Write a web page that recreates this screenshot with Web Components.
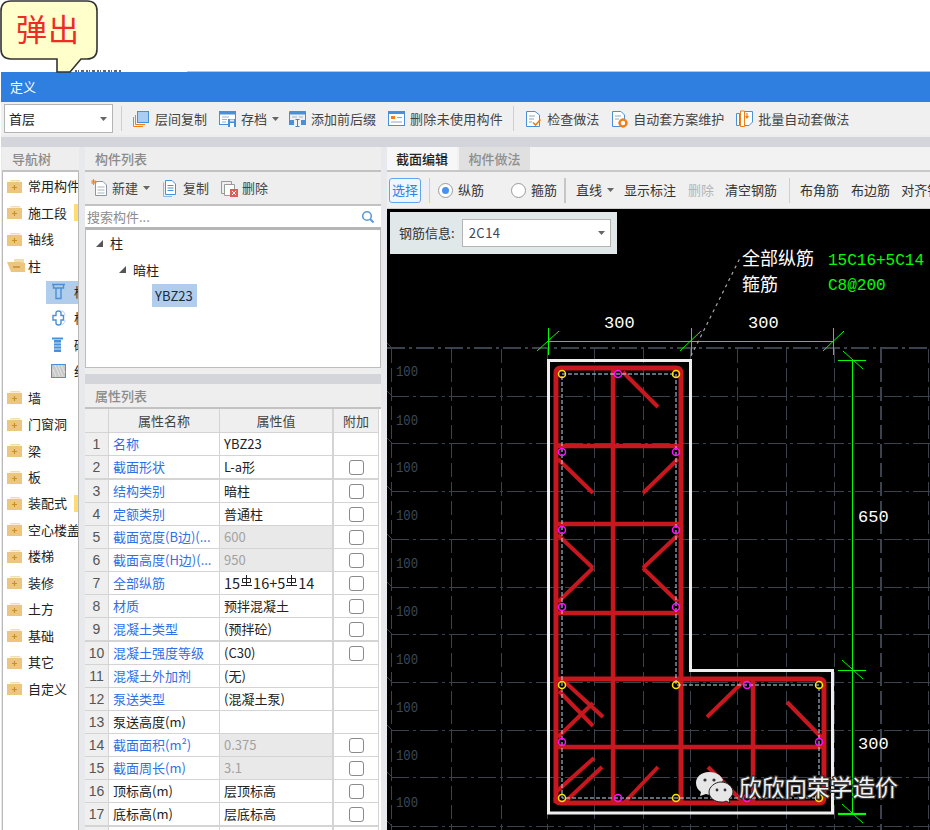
<!DOCTYPE html>
<html lang="zh-CN">
<head>
<meta charset="utf-8">
<title>定义</title>
<style>
  html, body { margin: 0; background: #fff; }
  body {
    width: 930px;
    height: 830px;
    overflow: hidden;
    font: 13px/18px "Noto Sans CJK SC", "Liberation Sans", sans-serif;
    color: #333;
  }
</style>
</head>
<body>
<page-top></page-top>
<def-window heading="定义">
  <main-toolbar slot="toolbar"></main-toolbar>
  <nav-panel></nav-panel>
  <list-panel></list-panel>
  <editor-panel></editor-panel>
</def-window>

<script>
const BLUE = '#4a90d9';
const ORANGE = '#f07f17';

const svg = (body, w = 18, h = 18) =>
  `<svg width="${w}" height="${h}" viewBox="0 0 ${w} ${h}" fill="none">${body}</svg>`;

const ICONS = {
  copyFloor: svg(`<rect x="5.5" y="1.5" width="11" height="11" fill="#a9cdf3" stroke="${BLUE}"/>
    <path d="M3.5 5V14.5H13M1.5 7V16.5H11" stroke="${ORANGE}"/>`),
  archive: svg(`<rect x=".5" y="1.5" width="16" height="13" fill="#fff" stroke="${BLUE}"/>
    <rect x="1" y="1" width="15" height="3.5" fill="${BLUE}"/>
    <path d="M3 7H10M3 9.5H8M3 12H7" stroke="#9db4cc"/>
    <rect x="9" y="9" width="8" height="8" fill="${BLUE}"/>
    <rect x="11" y="13" width="4" height="4" fill="#fff"/><rect x="11" y="9.5" width="4" height="2" fill="#dcebfa"/>`),
  addFix: svg(`<path d="M.5 13V1.5H16.5V13" stroke="${BLUE}"/>
    <rect x="1" y="1" width="15.5" height="3.5" fill="${BLUE}"/>
    <path d="M3 7H8M10 7H14" stroke="#9db4cc"/>
    <rect x="0" y="10" width="5" height="5" fill="${BLUE}"/>
    <rect x="12" y="10" width="5" height="5" fill="${BLUE}"/>
    <path d="M6.5 9.5H10.5M8.5 9.5V16.5M6.5 16.5H10.5" stroke="#5a7ea8"/>`),
  delUnused: svg(`<rect x=".5" y="1.5" width="16" height="14" fill="#fff" stroke="${BLUE}"/>
    <rect x="1" y="1" width="15" height="3" fill="${BLUE}"/>
    <rect x="3" y="6" width="4" height="3" fill="${ORANGE}"/>
    <path d="M9 7.5H14M3 12H14" stroke="#8fa6bf"/>`),
  check: svg(`<path d="M1.5 1.5H10L14.5 5V16.5H1.5Z" fill="#fff" stroke="${BLUE}"/>
    <path d="M4 6H10M4 9H9M4 12H7" stroke="#8fa6bf"/>
    <path d="M8 12.5L10.5 15L15.5 9.5" stroke="${ORANGE}" stroke-width="1.6"/>`),
  autoScheme: svg(`<path d="M1.5 1.5H10L13.5 5V16.5H1.5Z" fill="#fff" stroke="${BLUE}"/>
    <path d="M4 6H10M4 9H8" stroke="#8fa6bf"/>
    <circle cx="12" cy="13" r="3.4" fill="#fff" stroke="${ORANGE}" stroke-width="2.4"/>
    <path d="M12 8.5V10M12 16V17.5M7.5 13H9M15 13H16.5" stroke="${ORANGE}" stroke-width="1.6"/>`),
  batch: svg(`<path d="M.5 3.5H3.5V15.5H.5Z" fill="#fff" stroke="${BLUE}"/>
    <path d="M5 1.5H16.5V12L13 15.5H5Z" fill="#fff" stroke="${BLUE}"/>
    <path d="M4.5 1V16.5H8.5V1H4.5Z" fill="#fff" stroke="${ORANGE}"/>
    <path d="M11 3V7M9.5 6L11 8L12.5 6" stroke="${ORANGE}" stroke-width="1.2"/>`),
  newItem: svg(`<path d="M4.5 2.5H12L15.5 6V16.5H4.5Z" fill="#fff" stroke="#8a97a3"/>
    <path d="M6.5 8H13.5M6.5 11H13.5M6.5 14H13.5" stroke="#a9b3bd"/>
    <path d="M2.5 0V6M0 3H6M.7 1L4.5 5M4.5 1L.7 5" stroke="${ORANGE}" stroke-width=".9"/>`, 17, 18),
  copyDoc: svg(`<path d="M1.5 3.5V17.5H10" stroke="#8fb6de"/>
    <path d="M3.5 1.5H10L13.5 5V15.5H3.5Z" fill="#fff" stroke="${BLUE}"/>
    <path d="M5.5 6.5H11.5M5.5 9H11.5M5.5 11.5H11.5" stroke="${BLUE}"/>`, 15, 18),
  delDoc: svg(`<path d="M.5 2.5H10.5V14.5H.5Z" stroke="#9a9a9a"/>
    <path d="M3.5 5.5H13.5V16.5H3.5Z" fill="#fff" stroke="#9a9a9a"/>
    <rect x="9" y="10" width="8" height="8" fill="#d9605a"/>
    <path d="M11 12L15 16M15 12L11 16" stroke="#fff"/>`, 17, 18),
  folder: svg(`<path d="M3.5 1H12.5L14 2.5H3Z" fill="#f3dcae"/>
    <rect x="0" y="3" width="15" height="11" fill="#ecc67f"/>
    <path d="M5 8.5H10M7.5 6V11" stroke="#c78f2e" stroke-width="1.2"/>`, 16, 15),
  folderOpen: svg(`<path d="M7 1H17V13H8Z" fill="#f3dcae"/>
    <path d="M0 4H13L18 5V14H4Z" fill="#ecc67f"/>
    <path d="M6 9H13" stroke="#c78f2e" stroke-width="1.5"/>`, 19, 15),
  colFrame: svg(`<path d="M1 1.5H14M2.5 1.5V5H12.5V1.5" stroke="${BLUE}" stroke-width="1.4"/>
    <path d="M5 5V15.5H10V5" stroke="${BLUE}" stroke-width="1.4"/>`, 15, 17),
  colTie: svg(`<path d="M5 3Q5 1 7.5 1Q10 1 10 3V5.5H12.5V10H10V13Q10 15 7.5 15Q5 15 5 13V10H2V5.5H5Z" fill="#fff" stroke="${BLUE}" stroke-width="1.4"/>
    <path d="M10 1C13 1 14 3 14 5.5M14 10C14 12 13 14 10.5 15" stroke="#bcd3ec"/>`, 15, 16),
  colBrick: svg(`<path d="M1 1.5H12" stroke="${BLUE}" stroke-width="2"/>
    <rect x="3" y="3" width="7" height="12" fill="${BLUE}"/>
    <path d="M3 6H10M3 9H10M3 12H10" stroke="#cfe2f5"/>`, 13, 16),
  colEdge: svg(`<rect x=".5" y=".5" width="14" height="13" fill="#c9c9c9" stroke="${BLUE}"/>
    <path d="M4 1L9 13M7 1L12 13M2 5L5 13M10 1L14 9" stroke="#e4e4e4"/>`, 15, 14),
  search: svg(`<circle cx="6" cy="6" r="4.3" stroke="#5b9bd5" stroke-width="1.6"/>
    <path d="M9 9L12.5 12.5" stroke="#5b9bd5" stroke-width="2"/>`, 13, 13)
};

const ARROW = `<svg width="7" height="4" viewBox="0 0 7 4"><path d="M0 0H7L3.5 4Z" fill="#666"/></svg>`;

class PageTop extends HTMLElement {
  constructor() {
    super();
    this.attachShadow({ mode: 'open' }).innerHTML = `
<style>
  :host { display: block; height: 72px; position: relative; }
  .rule { position: absolute; left: 187px; right: 0; bottom: 0; height: 1px; background: #c4c4c4; }
  .dots { position: absolute; left: 75px; bottom: 0; display: block; }
  callout-bubble { position: absolute; left: 0; top: 0; }
</style>
<div class="rule"></div>
<svg class="dots" width="48" height="2"><path d="M0 1H47" stroke="#666" stroke-width="2" stroke-dasharray="2 1 1 2 3 2"/></svg>
<callout-bubble>弹出</callout-bubble>`;
  }
}

class CalloutBubble extends HTMLElement {
  constructor() {
    super();
    this.attachShadow({ mode: 'open' }).innerHTML = `
<style>
  :host { display: block; width: 99px; height: 72px; }
  svg { position: absolute; left: 0; top: 0; }
  .label {
    position: absolute; left: 16px; top: 6px; width: 66px; height: 44px;
    font-size: 31px; line-height: 44px; color: #ee2b24; letter-spacing: 1px; white-space: nowrap;
  }
</style>
<svg width="99" height="73" viewBox="0 0 99 73">
  <path d="M11 1H87Q97 1 97 11V49Q97 59 87 59H81L70 72H57V59H11Q1 59 1 49V11Q1 1 11 1Z"
        fill="#ffffcc" stroke="#333" stroke-width="1.6"/>
</svg>
<div class="label"><slot></slot></div>`;
  }
}

class DefWindow extends HTMLElement {
  connectedCallback() {
    this.attachShadow({ mode: 'open' }).innerHTML = `
<style>
  :host { display: flex; flex-direction: column; height: 758px; margin-left: 1px; overflow: hidden; }
  .title {
    flex: none; height: 30px; padding-left: 9px; background: #2e7fe0; color: #fff;
    display: flex; align-items: center; font-size: 13px;
  }
  .band { flex: none; height: 12px; background: #d3d5da; box-sizing: border-box; border-top: 2px solid #ececec; }
  .panes {
    flex: 1; min-height: 0; display: flex; background: #e8e9ec; padding-left: 1px;
  }
</style>
<div class="title">${this.getAttribute('heading')}</div>
<slot name="toolbar"></slot>
<div class="band"></div>
<div class="panes"><slot></slot></div>`;
  }
}

class ToolBtn extends HTMLElement {
  connectedCallback() {
    const icon = ICONS[this.getAttribute('icon')] || '';
    const arrow = this.hasAttribute('menu') ? `<span class="arrow">${ARROW}</span>` : '';
    this.attachShadow({ mode: 'open' }).innerHTML = `
<style>
  :host { display: inline-flex; align-items: center; gap: var(--icon-gap, 5px); white-space: nowrap; color: #444; }
  svg { display: block; }
  .arrow { margin-left: 1px; display: flex; }
</style>
${icon}<slot></slot>${arrow}`;
  }
}

class ToolSep extends HTMLElement {
  constructor() {
    super();
    this.attachShadow({ mode: 'open' }).innerHTML = `
<style>:host { display: block; width: 1px; height: 25px; background: #cfcfcf; }</style>`;
  }
}

class ComboBox extends HTMLElement {
  connectedCallback() {
    this.attachShadow({ mode: 'open' }).innerHTML = `
<style>
  :host {
    display: flex; align-items: center; justify-content: space-between; box-sizing: border-box;
    background: #fff; border: 1px solid #b4b4b4; padding: 0 5px 0 var(--pad, 4px);
  }
  svg { display: block; }
</style>
<span><slot></slot></span>${ARROW}`;
  }
}

class MainToolbar extends HTMLElement {
  constructor() {
    super();
    this.attachShadow({ mode: 'open' }).innerHTML = `
<style>
  :host {
    display: flex; align-items: center; height: 33px; box-sizing: border-box; flex: none;
    padding-left: 3px; background: #f0f0f0; font-size: 13px; --icon-gap: 4px;
  }
  combo-box { width: 109px; height: 29px; color: #222; }
</style>
<combo-box>首层</combo-box>
<tool-sep style="margin-left:8px"></tool-sep>
<tool-btn icon="copyFloor" style="margin-left:10px;--icon-gap:5px">层间复制</tool-btn>
<tool-btn icon="archive" menu style="margin-left:12px">存档</tool-btn>
<tool-btn icon="addFix" style="margin-left:10px">添加前后缀</tool-btn>
<tool-btn icon="delUnused" style="margin-left:12px;letter-spacing:.3px">删除未使用构件</tool-btn>
<tool-sep style="margin-left:10px"></tool-sep>
<tool-btn icon="check" style="margin-left:11px">检查做法</tool-btn>
<tool-btn icon="autoScheme" style="margin-left:12px">自动套方案维护</tool-btn>
<tool-btn icon="batch" style="margin-left:12px">批量自动套做法</tool-btn>`;
  }
}

class PanelHeader extends HTMLElement {
  constructor() {
    super();
    this.attachShadow({ mode: 'open' }).innerHTML = `
<style>
  :host {
    display: flex; align-items: center; flex: none; height: 23px; box-sizing: content-box;
    padding-left: 10px; background: #eee; color: #8b8b8b; font-size: 13px; font-weight: 500;
    border-bottom: 2px solid #c2c2c2; white-space: nowrap; overflow: hidden;
  }
</style>
<slot></slot>`;
  }
}

const NAV_ITEMS = [
  ['常用构件'], ['施工段', 'flag'], ['轴线'], ['柱', 'open'],
  ['框柱', 'sel', 'colFrame'], ['构造柱', 'sub', 'colTie'], ['砌体柱', 'sub', 'colBrick'], ['约束边缘', 'sub', 'colEdge'],
  ['墙'], ['门窗洞'], ['梁'], ['板'], ['装配式', 'flag'], ['空心楼盖'], ['楼梯'], ['装修'], ['土方'], ['基础'], ['其它'], ['自定义']
];

class NavPanel extends HTMLElement {
  constructor() {
    super();
    const rows = NAV_ITEMS.map(([text, kind, icon]) => {
      if (kind === 'sel' || kind === 'sub') {
        return `<div class="row sub ${kind}"><span class="ic">${ICONS[icon]}</span><span class="txt">${text}</span></div>`;
      }
      const folder = kind === 'open' ? ICONS.folderOpen : ICONS.folder;
      const flag = kind === 'flag' ? '<i class="flag"></i>' : '';
      return `<div class="row"><span class="fold">${folder}</span><span class="txt">${text}</span>${flag}</div>`;
    }).join('');
    this.attachShadow({ mode: 'open' }).innerHTML = `
<style>
  :host { display: flex; flex-direction: column; flex: none; width: 77px; margin-right: 6px; }
  .tree {
    flex: 1; background: #fff; border-left: 1px solid #b9b9b9; border-right: 1px solid #b9b9b9;
    padding-top: 1px; overflow: hidden;
  }
  .row { position: relative; display: flex; align-items: center; height: 26.45px; white-space: nowrap; color: #222; }
  .fold { flex: none; width: 25px; padding-left: 4px; box-sizing: border-box; display: flex; }
  .fold svg { display: block; }
  .sub { margin-left: 43px; padding-left: 5px; }
  .sel { background: linear-gradient(#fff 0 2px, #b1cdec 2px 25px, #fff 25px); }
  .ic { flex: none; width: 23px; display: flex; }
  .flag { position: absolute; left: 71px; top: 5px; width: 8px; height: 17px; background: #ffdc73; }
</style>
<panel-header>导航树</panel-header>
<div class="tree">${rows}</div>`;
  }
}

class CompTree extends HTMLElement {
  constructor() {
    super();
    const tri = `<svg width="7" height="7" viewBox="0 0 7 7"><path d="M7 0V7H0Z" fill="#555"/></svg>`;
    this.attachShadow({ mode: 'open' }).innerHTML = `
<style>
  :host {
    display: block; box-sizing: border-box; height: 141px; background: #fff;
    border: 1px solid #bdbdbd; border-top: 3px solid #b5b5b5; color: #222;
  }
  .node { display: flex; align-items: center; gap: 7px; height: 26.4px; white-space: nowrap; }
  .l0 { padding-left: 10px; }
  .l1 { padding-left: 33px; }
  .leaf {
    display: inline-flex; align-items: center; height: 23px; margin-left: 66px;
    padding: 0 4px 0 3px; background: #b1cdec; color: #1c2a3a;
  }
</style>
<div class="node l0">${tri}<span>柱</span></div>
<div class="node l1">${tri}<span>暗柱</span></div>
<div class="node"><span class="leaf">YBZ23</span></div>`;
  }
}

const REBAR = `<svg class="rb" width="11" height="11" viewBox="0 0 11 11"><path d="M1.5 3.5H9.5V7.5H1.5ZM5.5 0V10M0 10.5H11" stroke="currentColor" fill="none"/></svg>`;
// [名称, 值, 名称是否蓝色, 只读灰底, 有附加框, 行底粗线]
const PROPS = [
  ['名称', 'YBZ23', 1, 0, 0],
  ['截面形状', 'L-a形', 1, 0, 1, 1],
  ['结构类别', '暗柱', 1, 0, 1],
  ['定额类别', '普通柱', 1, 0, 1],
  ['截面宽度(B边)(...', '600', 1, 1, 1],
  ['截面高度(H边)(...', '950', 1, 1, 1],
  ['全部纵筋', `<span class="big">15</span>${REBAR}<span class="big">16+5</span>${REBAR}<span class="big">14</span>`, 1, 0, 1],
  ['材质', '预拌混凝土', 1, 0, 1],
  ['混凝土类型', '(预拌砼)', 1, 0, 1, 1],
  ['混凝土强度等级', '(C30)', 1, 0, 1],
  ['混凝土外加剂', '(无)', 1, 0, 0],
  ['泵送类型', '(混凝土泵)', 1, 0, 0],
  ['泵送高度(m)', '', 0, 0, 0],
  ['截面面积(m²)', '0.375', 1, 1, 1],
  ['截面周长(m)', '3.1', 1, 1, 1],
  ['顶标高(m)', '层顶标高', 0, 0, 1],
  ['底标高(m)', '层底标高', 0, 0, 1, 1]
];

class PropTable extends HTMLElement {
  constructor() {
    super();
    const rows = PROPS.map(([name, value, link, locked, box, thick], i) => `
<div class="row${thick ? ' thick' : ''}">
  <div class="c num">${i + 1}</div>
  <div class="c name${link ? ' link' : ''}">${name}</div>
  <div class="c val${locked ? ' locked' : ''}">${value}</div>
  <div class="c add">${box ? '<i class="box"></i>' : ''}</div>
</div>`).join('');
    this.attachShadow({ mode: 'open' }).innerHTML = `
<style>
  :host { display: block; background: #fff; color: #222; }
  .row { display: grid; grid-template-columns: 24px 111px 114px 45px; height: 23px; }
  .row.thick { height: 24px; }
  .c {
    display: flex; align-items: center; box-sizing: border-box; white-space: nowrap; overflow: hidden;
    border-right: 1px solid #d4d4d4; border-bottom: 1px solid #d4d4d4; padding-left: 3px;
  }
  .thick .c { border-bottom-width: 2px; }
  .head { height: 24px; }
  .head .c { background: #efefef; justify-content: center; color: #444; padding: 0; border-bottom-width: 1px; }
  .num { background: #efefef; justify-content: center; padding: 0; color: #555; font-size: 14px; font-family: "Liberation Sans", sans-serif; }
  .name { padding-left: 4px; }
  .link { color: #2f6fe4; }
  .val { padding-left: 4px; }
  .c:nth-child(3) { border-right-width: 2px; }
  .locked { background: #e9e9e9; color: #a2a2a2; }
  .add { justify-content: center; padding: 0; }
  .box { display: block; width: 13px; height: 13px; border: 1px solid #8a8a8a; border-radius: 3px; background: #fff; }
  .big { font-size: 14.5px; }
  .rb { margin: -5px 1px 0 1px; display: block; }
</style>
<div class="row head">
  <div class="c"></div><div class="c">属性名称</div><div class="c">属性值</div><div class="c">附加</div>
</div>
${rows}
<div class="row">
  <div class="c num"></div><div class="c"></div><div class="c"></div><div class="c add"><i class="box"></i></div>
</div>`;
  }
}

class ListPanel extends HTMLElement {
  constructor() {
    super();
    this.attachShadow({ mode: 'open' }).innerHTML = `
<style>
  :host { display: flex; flex-direction: column; flex: none; width: 296px; margin-right: 6px; overflow: hidden; }
  .tools {
    flex: none; display: flex; align-items: center; height: 32px; padding-left: 6px; gap: 12px;
    background: #eee; border-bottom: 2px solid #c2c2c2; --icon-gap: 4px;
  }
  .search {
    flex: none; display: flex; align-items: center; justify-content: space-between; height: 21px;
    padding: 0 7px 0 2px; background: #fff; color: #8c8c8c;
  }
  .search svg { display: block; }
  comp-tree { flex: none; }
  .gap { flex: none; height: 6px; background: #eee; }
  .gray { flex: none; height: 10px; background: #d3d5da; }
  prop-table { flex: 1; }
</style>
<panel-header>构件列表</panel-header>
<div class="tools">
  <tool-btn icon="newItem" menu>新建</tool-btn>
  <tool-btn icon="copyDoc" style="--icon-gap:6px">复制</tool-btn>
  <tool-btn icon="delDoc">删除</tool-btn>
</div>
<div class="search"><span>搜索构件...</span>${ICONS.search}</div>
<comp-tree></comp-tree>
<div class="gap"></div>
<div class="gray"></div>
<panel-header>属性列表</panel-header>
<prop-table></prop-table>`;
  }
}

class EditorPanel extends HTMLElement {
  constructor() {
    super();
    this.attachShadow({ mode: 'open' }).innerHTML = `
<style>
  :host { display: flex; flex-direction: column; flex: 1; min-width: 0; overflow: hidden; }
  .tabs { flex: none; display: flex; height: 23px; background: #f2f2f2; border-bottom: 2px solid #c8c8c8; }
  .tab { display: flex; align-items: center; justify-content: center; white-space: nowrap; }
  .on { width: 70px; background: #f7f7f7; color: #222; font-weight: 500; }
  .off { width: 71px; background: #e0e0e0; color: #8f8f8f; margin-left: 2px; font-weight: 500; }
  .bar {
    flex: none; display: flex; align-items: center; height: 37px; padding-left: 2px; background: #f0f0f0;
    border-bottom: 1px solid #cfcfcf; white-space: nowrap; overflow: hidden; box-sizing: border-box; color: #333;
  }
  .pick {
    box-sizing: border-box; width: 32px; height: 25px; display: flex; align-items: center; justify-content: center;
    border: 1px solid #62a5ef; border-radius: 3px; background: #eff6ff; color: #2f7fe6; flex: none;
  }
  .radio { box-sizing: border-box; width: 15px; height: 15px; border-radius: 50%; background: #fff; border: 1px solid #9a9a9a; flex: none; position: relative; }
  .radio.on-r::after { content: ""; position: absolute; left: 3px; top: 3px; width: 7px; height: 7px; border-radius: 50%; background: #4a90f0; }
  .t { flex: none; }
  tool-sep { flex: none; }
  .work { flex: 1; min-height: 0; position: relative; background: #000; }
  .info {
    position: absolute; left: 3px; top: 3px; width: 227px; height: 42px; background: #e1e8ea;
    display: flex; align-items: center; padding-left: 9px; gap: 7px; box-sizing: border-box; color: #333;
  }
  combo-box { width: 149px; height: 28px; --pad: 6px; color: #445; letter-spacing: .5px; }
  cad-drawing { position: absolute; inset: 0; }
</style>
<div class="tabs"><div class="tab on">截面编辑</div><div class="tab off">构件做法</div></div>
<div class="bar">
  <div class="pick">选择</div>
  <tool-sep style="margin:0 8px"></tool-sep>
  <div class="radio on-r"></div><span class="t" style="margin:0 27px 0 5px">纵筋</span>
  <div class="radio"></div><span class="t" style="margin:0 7px 0 5px">箍筋</span>
  <tool-sep style="width:2px;margin-right:10px;background:#c6c6c6"></tool-sep>
  <tool-btn menu style="--icon-gap:4px;margin-right:10px;color:#333">直线</tool-btn>
  <span class="t" style="margin-right:12px">显示标注</span>
  <span class="t" style="margin-right:11px;color:#b5b5b5">删除</span>
  <span class="t" style="margin-right:12px">清空钢筋</span>
  <tool-sep style="margin-right:10px"></tool-sep>
  <span class="t" style="margin-right:12px">布角筋</span>
  <span class="t" style="margin-right:11px">布边筋</span>
  <span class="t">对齐钢筋</span>
</div>
<div class="work">
  <cad-drawing></cad-drawing>
  <div class="info"><span>钢筋信息:</span><combo-box>2C14</combo-box></div>
</div>`;
  }
}

class CadDrawing extends HTMLElement {
  constructor() {
    super();
    const line = (x1, y1, x2, y2) => `<line x1="${x1}" y1="${y1}" x2="${x2}" y2="${y2}"/>`;

    // 轴网
    const gridY = [396, 443, 491, 539, 587, 634, 682, 730, 777, 826];
    const gridX = [451, 501, 547, 594, 643, 690, 737, 786, 834, 928];
    const grid = `
<g stroke="#3a424e" stroke-width="1" stroke-dasharray="18 4 3 4">
  ${gridY.map(y => line(391, y + .5, 930, y + .5)).join('')}
  <line x1="387" y1="348" x2="930" y2="348" stroke-width="2"/>
</g>
<g stroke="#3a424e" stroke-width="1" stroke-dasharray="14 5">
  ${gridX.map(x => line(x + .5, 349, x + .5, 830)).join('')}
  <line x1="391.5" y1="349" x2="391.5" y2="830"/>
  <line x1="881" y1="349" x2="881" y2="830" stroke-width="2"/>
</g>
<g stroke="#3a424e">${[348, 396, 443, 491, 539, 587, 634, 682, 730, 777, 826].map(y => line(387, y - 5, 393, y + 1)).join('')}</g>
<g fill="#3f4855" font-family="'Liberation Mono', monospace" font-size="14">
  ${[376, 425, 472, 520, 568, 616, 664, 712, 760, 807].map(y => `<text x="396" y="${y}" textLength="22" lengthAdjust="spacingAndGlyphs">100</text>`).join('')}
</g>`;

    // 钢筋
    const hooks = [
      [623, 372, 658, 407], [558, 459, 593, 493], [678, 459, 643, 493],
      [558, 535, 593, 568], [593, 568, 558, 602], [678, 535, 643, 568], [643, 568, 678, 602],
      [565, 682, 603, 717], [559, 691, 593, 726], [593, 703, 558, 737],
      [594, 758, 556, 792], [602, 767, 565, 802], [658, 767, 625, 802],
      [745, 680, 707, 717], [787, 702, 822, 738], [708, 767, 743, 802]
    ];
    const bars = `
<g stroke="#c8171f" fill="none">
  <path d="M556 803V373Q556 368 561 368H676Q681 368 681 373V803" stroke-width="5"/>
  <path d="M556 679H819Q824 679 824 684V798Q824 803 819 803H561Q556 803 556 798" stroke-width="5"/>
  <path d="M613 368V803M753 679V803M556 446H681M556 524H681M556 613H681M556 747H824" stroke-width="4.5"/>
  <g stroke-width="4">${hooks.map(h => line(...h)).join('')}</g>
</g>`;

    const yellow = [[562, 374], [676, 374], [562, 685], [676, 685], [819, 685], [562, 798], [676, 798], [819, 798]];
    const pink = [[618, 374], [562, 452], [676, 452], [562, 530], [676, 530], [562, 607], [676, 607], [562, 742], [819, 742], [747, 685], [618, 798], [747, 798]];
    const dots = `
<g fill="none" stroke-width="1.5">
  <g stroke="#ffe600">${yellow.map(([x, y]) => `<circle cx="${x}" cy="${y}" r="3.5"/>`).join('')}</g>
  <g stroke="#ff10ff">${pink.map(([x, y]) => `<circle cx="${x}" cy="${y}" r="3.5"/>`).join('')}</g>
</g>`;

    // 尺寸标注
    const dims = `
<g stroke="#00ff00" stroke-width="1">
  <path d="M548 341.5H833M548.5 328V355M691.5 328V355M833.5 328V355"/>
  <path d="M537 351L559 331M680 351L701 331M823 351L844 331"/>
  <path d="M852.5 360V814M838 360.5H866M838 670.5H866"/>
  <path d="M838 814H866" stroke-width="2.2"/>
  <path d="M843 351L863 369M842 660L863 679M842 804L863 823"/>
</g>`;

    this.attachShadow({ mode: 'open' }).innerHTML = `
<style>
  :host { display: block; }
  svg { display: block; }
  .cjk { font-family: "Noto Sans CJK SC", sans-serif; }
  .mono { font-family: "Liberation Mono", monospace; }
  .wm { font-family: "Noto Sans CJK SC", sans-serif; font-size: 22.7px; fill: #f2f2f2; stroke: #333; stroke-width: 2.5px; paint-order: stroke; }
</style>
<svg width="543" height="621" viewBox="387 209 543 621">
  ${grid}
  <path d="M548.5 360.5H690.5V670.5H832.5V813H548.5Z" fill="none" stroke="#eeeeee" stroke-width="3"/>
  ${bars}
  <path d="M562 374H676V685H819V798H562Z" fill="none" stroke="#b8dcf5" stroke-dasharray="4 2"/>
  ${dots}
  ${dims}
  <path d="M691 356L740 258" stroke="#a8a8a8" stroke-width="1.2" stroke-dasharray="3 4"/>
  <g fill="#fff" class="cjk" font-size="18">
    <text x="742" y="265">全部纵筋</text>
    <text x="742" y="291">箍筋</text>
  </g>
  <g fill="#00ff00" class="mono" font-size="16">
    <text x="828" y="265">15C16+5C14</text>
    <text x="828" y="290">C8@200</text>
  </g>
  <g fill="#fff" class="mono" font-size="17">
    <text x="604" y="328">300</text>
    <text x="748" y="328">300</text>
    <text x="858" y="522">650</text>
    <text x="858" y="749">300</text>
  </g>
  <g>
    <path d="M709 772C701 772 696 777 696 783C696 787 698 790 701 792L700 796L706 794C708 795 711 795 713 794L723 780C721 775 716 772 709 772Z" fill="#e6e6e6"/>
    <circle cx="705" cy="780" r="1.6" fill="#333"/><circle cx="714" cy="780" r="1.6" fill="#333"/>
    <path d="M721 782C715 782 709 787 709 792C709 798 715 802 721 802C723 802 725 802 726 801L730 803L729 799C731 797 733 795 733 792C733 787 728 782 721 782Z" fill="#e6e6e6" stroke="#222"/>
    <circle cx="717" cy="790" r="1.4" fill="#333"/><circle cx="725" cy="790" r="1.4" fill="#333"/>
    <text class="wm" x="739" y="796">欣欣向荣学造价</text>
  </g>
</svg>`;
  }
}

customElements.define('callout-bubble', CalloutBubble);
customElements.define('page-top', PageTop);
customElements.define('tool-btn', ToolBtn);
customElements.define('tool-sep', ToolSep);
customElements.define('combo-box', ComboBox);
customElements.define('main-toolbar', MainToolbar);
customElements.define('panel-header', PanelHeader);
customElements.define('nav-panel', NavPanel);
customElements.define('comp-tree', CompTree);
customElements.define('prop-table', PropTable);
customElements.define('list-panel', ListPanel);
customElements.define('cad-drawing', CadDrawing);
customElements.define('editor-panel', EditorPanel);
customElements.define('def-window', DefWindow);
</script>
</body>
</html>
